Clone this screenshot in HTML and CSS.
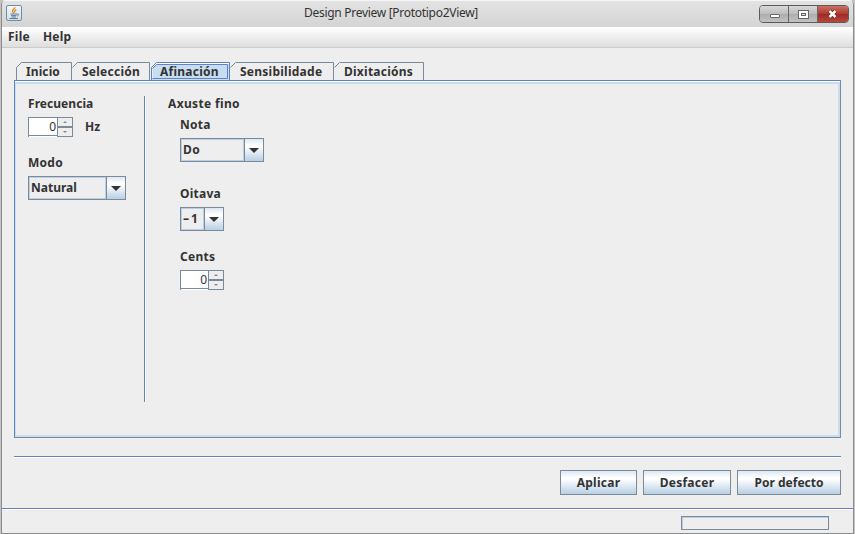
FILE: index.html
```html
<!DOCTYPE html>
<html lang="gl">
<head>
<meta charset="utf-8">
<title>Design Preview [Prototipo2View]</title>
<link rel="stylesheet" href="styles.css">
</head>
<body>
<div class="window">
  <header class="titlebar">
    <svg class="app-icon" viewBox="0 0 16 16" width="16" height="16">
      <defs><linearGradient id="ig" x2="0" y2="1"><stop offset="0" stop-color="#f7f7f7"/><stop offset="1" stop-color="#d3dce3"/></linearGradient></defs>
      <rect x=".5" y=".5" width="15" height="15" rx="1.5" fill="url(#ig)" stroke="#6e8ea5"/>
      <path d="M8.8 2.2c.5 1.6-2.600 2.200-2.300 4 .1.800.900 1.200 1.300 2M10.300 4.600c-1.600.8-2 1.600-1.200 2.800" fill="none" stroke="#e98118" stroke-width="1.300"/>
      <path d="M4.500 9h6.500M5 10.600h5.500M5.500 12h4.500M11 9c2.200-.6 2 1.600.2 2M3.500 13.500h8.500" fill="none" stroke="#4b7795" stroke-width=".9"/>
    </svg>
    <h1 class="title">Design Preview [Prototipo2View]</h1>
    <div class="controls">
      <span class="control"><svg width="28" height="16"><rect x="10.500" y="8.500" width="9" height="3" rx=".5" fill="#fff" stroke="#666"/></svg></span>
      <span class="control"><svg width="28" height="16"><rect x="9.500" y="4.500" width="10" height="8" fill="#fff" stroke="#666"/><rect x="12.500" y="7.500" width="4" height="2" fill="#ddd" stroke="#666"/></svg></span>
      <span class="control close"><svg width="30" height="16"><path d="M11.500 5l6 6M17.500 5l-6 6" stroke="#6b251c" stroke-width="4.500"/><path d="M11.500 5l6 6M17.500 5l-6 6" stroke="#fff" stroke-width="2.500"/></svg></span>
    </div>
  </header>
  <nav class="menubar"><span class="file">File</span><span class="help">Help</span></nav>
  <main class="content">
    <div class="tabs">
      <div class="tab t1"><svg width="56" height="18"><path d="M.5 18V5.500l5-5h50V18"/></svg><span>Inicio</span></div>
      <div class="tab t2"><svg width="78" height="18"><path d="M.5 5.500l5-5h72V18"/></svg><span>Selección</span></div>
      <div class="tab t3"><svg width="80" height="18"><path class="fill" d="M1 18V5.500l5-5h73.500V18z"/><path class="ring" d="M2 17V6l4.500-4.500h72.500"/><path class="edge" d="M1.500 18V5.500l5-5h73V18"/><path class="edge" d="M2.500 6.500l4-4h71v14h-75"/></svg><span>Afinación</span></div>
      <div class="tab t4"><svg width="104" height="18"><path d="M.5 5.500l5-5h98V18"/></svg><span>Sensibilidade</span></div>
      <div class="tab t5"><svg width="90" height="18"><path d="M.5 5.500l5-5h84V18"/></svg><span>Dixitacións</span></div>
    </div>
    <section class="pane">
      <div class="left">
        <label class="label frecuencia">Frecuencia</label>
        <div class="row">
          <div class="spinner"><span class="value">0</span><span class="arrows"><i><svg width="4" height="2"><path d="M0 2L2 0l2 2z"/></svg></i><i><svg width="4" height="2"><path d="M0 0h4L2 2z"/></svg></i></span></div>
          <span class="hz">Hz</span>
        </div>
        <label class="label modo">Modo</label>
        <div class="combo natural"><span class="value">Natural</span><span class="drop"><svg width="10" height="5"><path d="M0 0h10L5 5z"/></svg></span></div>
      </div>
      <div class="right">
        <label class="label axuste">Axuste fino</label>
        <div class="tune">
          <label class="label nota">Nota</label>
          <div class="combo do"><span class="value">Do</span><span class="drop"><svg width="10" height="5"><path d="M0 0h10L5 5z"/></svg></span></div>
          <label class="label oitava">Oitava</label>
          <div class="combo octave"><span class="value"><span class="minus">-</span>1</span><span class="drop"><svg width="10" height="5"><path d="M0 0h10L5 5z"/></svg></span></div>
          <label class="label cents">Cents</label>
          <div class="spinner narrow"><span class="value">0</span><span class="arrows"><i><svg width="4" height="2"><path d="M0 2L2 0l2 2z"/></svg></i><i><svg width="4" height="2"><path d="M0 0h4L2 2z"/></svg></i></span></div>
        </div>
      </div>
    </section>
    <div class="actions">
      <button class="aplicar">Aplicar</button><button class="desfacer">Desfacer</button><button class="defecto">Por defecto</button>
    </div>
  </main>
  <footer class="status"><div class="progress"></div></footer>
</div>
</body>
</html>
```
FILE: styles.css
```css
* { box-sizing: border-box; }
html, body { margin: 0; height: 534px; overflow: hidden; }
body {
  padding: 0 1px;
  background: #c4c4c4;
  color: #333;
  font: bold 12px/16px "Noto Sans", sans-serif;
  letter-spacing: .25px;
}
svg { display: block; }
.window {
  width: 853px;
  height: 534px;
  display: flex;
  flex-direction: column;
  background: #eee;
  border: 1px solid #8b8b8b;
  border-top-color: #f6f6f6;
  border-radius: 5px 5px 0 0;
  overflow: hidden;
}
.titlebar {
  height: 26px;
  flex: none;
  display: grid;
  grid-template-columns: 120px 1fr 193px;
  background: linear-gradient(#e3e3e3, #d4d4d4);
}
.app-icon { margin: 4px 0 0 4px; }
.title {
  margin: 3px 0 0;
  text-align: center;
  font: 12px/17px "Noto Sans", sans-serif;
  letter-spacing: -.29px;
  white-space: nowrap;
}
.controls {
  width: 90px;
  height: 18px;
  margin: 4px 0 0 99px;
  display: flex;
  border: 1px solid #5b5b5b;
  border-radius: 4px;
  overflow: hidden;
}
.control {
  width: 29px;
  border-right: 1px solid #666;
  background: linear-gradient(#d9d9d9, #bcbcbc 50%, #adadad 51%, #c2c2c2);
}
.close {
  width: 30px;
  border: 0;
  background: linear-gradient(#cc7065, #ae392d 50%, #9c2c22 51%, #b8483c);
}
.menubar {
  height: 21px;
  flex: none;
  display: flex;
  gap: 13px;
  padding: 2px 0 0 6px;
  border-bottom: 1px solid #ccc;
  background: linear-gradient(#fff, #dedede);
}
.content { flex: none; height: 460px; padding: 14px 12px 0; }
.tabs { height: 18px; display: flex; padding-left: 2px; }
.tab { display: grid; }
.tab > * { grid-area: 1 / 1; }
.tab span { padding: 2px 0 0 10px; line-height: 15px; }
.t1 { letter-spacing: .1px; }
.tab path { fill: none; stroke: #7a8a99; }
.tab .fill { fill: #c8ddf2; stroke: none; }
.tab .ring { stroke: #fff; }
.tab .edge { stroke: #6382bf; }
.pane {
  width: 827px;
  height: 358px;
  display: flex;
  border: 1px solid #6382bf;
  border-right-color: #7a8a99;
  border-bottom-color: #7a8a99;
  box-shadow: inset 0 1px #fff, inset 1px 0 #c8ddf2, inset -2px -2px #c8ddf2, inset 0 3px #c8ddf2;
}
.label { display: block; height: 16px; white-space: nowrap; }
.frecuencia { letter-spacing: .05px; }
.axuste { letter-spacing: .35px; }
.left {
  width: 131px;
  height: 306px;
  margin-top: 15px;
  padding-left: 13px;
  border-right: 1px solid #fff;
  box-shadow: inset -1px 0 #6382bf;
}
.row { display: flex; margin: 5px 0 18px; height: 20px; }
.hz { margin: 2px 0 0 12px; letter-spacing: 0; }
.right { padding: 15px 0 0 22px; }
.tune { padding: 5px 0 0 12px; }
.spinner { width: 45px; height: 20px; display: flex; }
.spinner .value {
  width: 29px;
  height: 20px;
  background: #fff;
  border: solid #7a8a99;
  border-width: 1px 0 0 1px;
  box-shadow: inset 0 -1px #fff, inset 0 -2px #7a8a99;
  padding-right: 1px;
  text-align: right;
  font: 12px/18px "Noto Sans", sans-serif;
  letter-spacing: 0;
}
.narrow { width: 44px; }
.narrow .value { width: 28px; }
.arrows { width: 16px; display: grid; grid-template-rows: 10px 10px; }
.arrows i { display: grid; place-items: center; border: 1px solid #7a8a99; }
.arrows path { fill: #7a8a99; }
.combo { height: 24px; display: flex; border: 1px solid #7a8a99; }
.combo .value { flex: 1; border: 1px solid #b8cfe5; padding-left: 1px; line-height: 20px; }
.drop {
  flex: none;
  width: 19px;
  display: grid;
  place-items: center;
  border-left: 1px solid #7a8a99;
  background: linear-gradient(#dde8f3, #fff 30%, #fff 35%, #b8cfe5);
}
.drop svg { margin-top: 1px; }
.drop path { fill: #333; }
.natural { width: 98px; margin-top: 5px; letter-spacing: 0; }
.do { width: 84px; margin: 5px 0 24px; letter-spacing: .5px; }
.octave { width: 44px; margin: 5px 0 18px; letter-spacing: 0; }
.minus { display: inline-block; width: 8px; transform: scaleX(1.6); transform-origin: left; }
.cents { margin-bottom: 5px; letter-spacing: .3px; }
.actions {
  width: 827px;
  margin-top: 18px;
  padding-top: 13px;
  display: flex;
  justify-content: flex-end;
  gap: 6px;
  border-top: 1px solid #6382bf;
  box-shadow: inset 0 1px #fff;
}
button {
  height: 25px;
  padding: 0;
  color: #333;
  border: 1px solid #7a8a99;
  background: linear-gradient(#dde8f3, #fff 30%, #fff 35%, #b8cfe5);
  font: inherit;
  letter-spacing: inherit;
}
.aplicar { width: 77px; }
.desfacer { width: 88px; }
.defecto { width: 104px; letter-spacing: 0; }
.status {
  flex: 1;
  border-top: 1px solid #6382bf;
  box-shadow: inset 0 1px #fff;
  display: flex;
  justify-content: flex-end;
  padding: 7px 24px 0 0;
}
.progress { width: 148px; height: 14px; border: 1px solid #7a8a99; box-shadow: inset 1px 1px #b8cfe5; }
```
